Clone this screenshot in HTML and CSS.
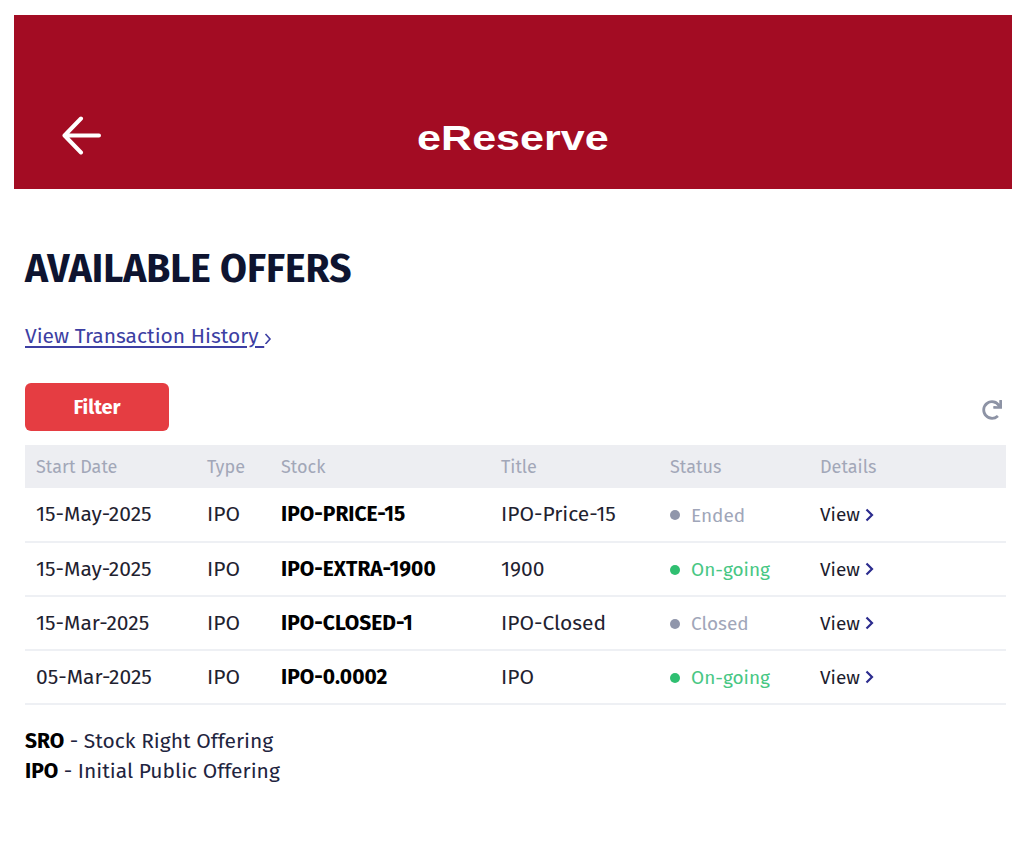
FILE: index.html
```html
<!DOCTYPE html>
<html lang="en">

<head>
    <meta charset="UTF-8">
    <meta name="viewport" content="width=device-width,initial-scale=1.0">
    <title>eReserve</title>
    <link rel="stylesheet" href="styles.css">
</head>

<body>
    <div class="page">
        <!-- Top bar -->
        <header class="topbar">
            <a class="back" href="#">
                <svg width="40" height="40" viewBox="0 0 40 40">
                    <path d="M38 19.5 H4 M20 2.5 L3.5 19.5 L20 36.5" fill="none" stroke="#fff" stroke-width="4" stroke-linecap="round" stroke-linejoin="round" />
                </svg>
            </a>
            <h1 class="app-title">eReserve</h1>
        </header>

        <main class="content">
            <h2 class="heading">AVAILABLE OFFERS</h2>
            <a class="history" href="#"><span class="history-text">View Transaction History </span><svg width="8" height="12" viewBox="0 0 8 12">
                    <path d="M1.5 2 L6 7 L1.5 12" fill="none" stroke="#3d3fa3" stroke-width="1.6" />
                </svg></a>

            <div class="toolbar">
                <button class="filter-btn">Filter</button>
                <svg class="refresh" width="20" height="20" viewBox="0 0 512 512">
                    <path fill="#8d93a5" d="M500.33 0h-47.41a12 12 0 0 0-12 12.57l4 82.76A247.42 247.42 0 0 0 256 8C119.34 8 7.9 119.53 8 256.19 8.1 393.07 119.1 504 256 504a247.1 247.1 0 0 0 166.18-63.910 12 12 0 0 0 .48-17.43l-34-34a12 12 0 0 0-16.38-.55A176 176 0 1 1 402.1 157.8l-101.530-4.87a12 12 0 0 0-12.57 12v47.41a12 12 0 0 0 12 12h200.33a12 12 0 0 0 12-12V12a12 12 0 0 0-12-12z" />
                </svg>
            </div>

            <table class="offers">
                <colgroup>
                    <col style="width: 171px">
                    <col style="width: 74px">
                    <col style="width: 220px">
                    <col style="width: 169px">
                    <col style="width: 150px">
                    <col>
                </colgroup>
                <thead>
                    <tr>
                        <th>Start Date</th>
                        <th>Type</th>
                        <th>Stock</th>
                        <th>Title</th>
                        <th>Status</th>
                        <th>Details</th>
                    </tr>
                </thead>
                <tbody>
                    <tr>
                        <td>15-May-2025</td>
                        <td>IPO</td>
                        <td class="stock">IPO-PRICE-15</td>
                        <td>IPO-Price-15</td>
                        <td><span class="status ended">Ended</span></td>
                        <td><a class="view" href="#">View<svg width="10" height="14" viewBox="0 0 10 14"><path d="M2.5 1.5 L8 7 L2.5 12.5" fill="none" stroke="#2c2c8e" stroke-width="2.2" /></svg></a></td>
                    </tr>
                    <tr>
                        <td>15-May-2025</td>
                        <td>IPO</td>
                        <td class="stock">IPO-EXTRA-1900</td>
                        <td>1900</td>
                        <td><span class="status ongoing">On-going</span></td>
                        <td><a class="view" href="#">View<svg width="10" height="14" viewBox="0 0 10 14"><path d="M2.5 1.5 L8 7 L2.5 12.5" fill="none" stroke="#2c2c8e" stroke-width="2.2" /></svg></a></td>
                    </tr>
                    <tr>
                        <td>15-Mar-2025</td>
                        <td>IPO</td>
                        <td class="stock">IPO-CLOSED-1</td>
                        <td>IPO-Closed</td>
                        <td><span class="status ended">Closed</span></td>
                        <td><a class="view" href="#">View<svg width="10" height="14" viewBox="0 0 10 14"><path d="M2.5 1.5 L8 7 L2.5 12.5" fill="none" stroke="#2c2c8e" stroke-width="2.2" /></svg></a></td>
                    </tr>
                    <tr>
                        <td>05-Mar-2025</td>
                        <td>IPO</td>
                        <td class="stock">IPO-0.0002</td>
                        <td>IPO</td>
                        <td><span class="status ongoing">On-going</span></td>
                        <td><a class="view" href="#">View<svg width="10" height="14" viewBox="0 0 10 14"><path d="M2.5 1.5 L8 7 L2.5 12.5" fill="none" stroke="#2c2c8e" stroke-width="2.2" /></svg></a></td>
                    </tr>
                </tbody>
            </table>

            <!-- Legend for offer types -->
            <div class="legend">
                <p><b>SRO</b> - Stock Right Offering</p>
                <p><b>IPO</b> - Initial Public Offering</p>
            </div>
        </main>
    </div>
</body>

</html>
```
FILE: styles.css
```css
* {
    padding: 0;
    margin: 0;
    box-sizing: border-box;
}

body {
    background: #fff;
    font-family: "Fira Sans", "Roboto", sans-serif;
    color: #1f2230;
}

.page {
    padding: 15px 12px 0 14px;
}

/* Top bar */
.topbar {
    height: 174px;
    background: #a30c23;
    display: grid;
    grid-template-columns: 1fr auto 1fr;
    align-items: start;
    padding: 101px 47px 0 47px;
}

.back {
    display: block;
    width: 40px;
    height: 40px;
}

.back svg {
    display: block;
}

.app-title {
    margin-top: 4px;
    font-family: "Liberation Sans", Arial, sans-serif;
    font-size: 35px;
    line-height: 1;
    font-weight: bold;
    color: #fff;
    transform: scaleX(1.23);
}

/* Main content */
.content {
    padding: 0 6px 0 11px;
}

.heading {
    margin-top: 61px;
    font-size: 39px;
    line-height: 1;
    font-weight: 700;
    color: #0e1430;
}

.history {
    display: inline-block;
    margin-top: 37px;
    font-size: 21px;
    line-height: 1;
    color: #3d3fa3;
    text-decoration: none;
}

.history-text {
    text-decoration: underline;
    text-underline-offset: 3px;
}

.history svg {
    vertical-align: -1px;
}

.toolbar {
    display: flex;
    justify-content: space-between;
    align-items: center;
    margin-top: 36px;
    padding-right: 4px;
}

.filter-btn {
    width: 144px;
    height: 48px;
    border: none;
    border-radius: 6px;
    background: #e53d42;
    color: #fff;
    font-family: inherit;
    font-size: 20px;
    font-weight: 700;
    cursor: pointer;
}

.refresh {
    margin-top: 6px;
}

/* Offers table */
.offers {
    width: 100%;
    margin-top: 14px;
    border-collapse: collapse;
    table-layout: fixed;
}

.offers th {
    height: 43px;
    padding: 0 0 0 11px;
    background: #edeef2;
    text-align: left;
    font-size: 18px;
    font-weight: 400;
    color: #a2a7b8;
}

.offers td {
    height: 54px;
    padding: 0 0 0 11px;
    border-bottom: 2px solid #eef0f4;
    font-size: 21px;
    line-height: 1;
    color: #1f2230;
    white-space: nowrap;
}

.offers .stock {
    font-weight: 700;
    color: #000;
}

.status {
    display: inline-flex;
    align-items: center;
    gap: 11px;
    font-size: 19px;
    vertical-align: 1px;
}

.status::before {
    content: "";
    width: 10px;
    height: 10px;
    border-radius: 50%;
}

.status.ended {
    color: #a0a6b9;
}

.status.ended::before {
    background: #9096ab;
}

.status.ongoing {
    color: #48c784;
}

.status.ongoing::before {
    background: #2fbf71;
}

.view {
    display: inline-flex;
    align-items: center;
    gap: 4px;
    font-size: 19px;
    color: #1c1c2e;
    text-decoration: none;
}

/* Legend */
.legend {
    margin-top: 21px;
    font-size: 21px;
    line-height: 30px;
    color: #1f2540;
}

.legend b {
    color: #000;
}
```
